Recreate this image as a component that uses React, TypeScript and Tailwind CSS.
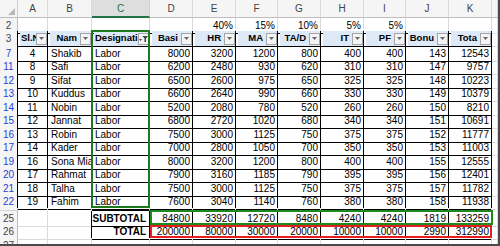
import React from "react";

const COLS =
  "grid grid-cols-[18px_30px_44px_58px_43px_43px_42px_43px_43px_42px_43px_43px_1fr]";

type Row = {
  n: number;
  label: string;
  h: string;
  kind: "pct" | "head" | "data" | "sp" | "sub" | "tot" | "blank";
  vals?: (string | number)[];
};

const data: [number, ...(string | number)[]][] = [
  [7, 4, "Shakib", 8000, 3200, 1200, 800, 400, 400, 143, 12543],
  [11, 8, "Safi", 6200, 2480, 930, 620, 310, 310, 147, 9757],
  [12, 9, "Sifat", 6500, 2600, 975, 650, 325, 325, 148, 10223],
  [13, 10, "Kuddus", 6600, 2640, 990, 660, 330, 330, 149, 10379],
  [14, 11, "Nobin", 5200, 2080, 780, 520, 260, 260, 150, 8210],
  [15, 12, "Jannat", 6800, 2720, 1020, 680, 340, 340, 151, 10691],
  [16, 13, "Robin", 7500, 3000, 1125, 750, 375, 375, 152, 11777],
  [17, 14, "Kader", 7000, 2800, 1050, 700, 350, 350, 153, 11003],
  [19, 16, "Sona Mia", 8000, 3200, 1200, 800, 400, 400, 155, 12555],
  [20, 17, "Rahmat", 7900, 3160, 1185, 790, 395, 395, 156, 12401],
  [21, 18, "Talha", 7500, 3000, 1125, 750, 375, 375, 157, 11782],
  [22, 19, "Fahim", 7600, 3040, 1140, 760, 380, 380, 158, 11938],
];

const rows: Row[] = [
  { n: 2, label: "2", h: "h-[13px]", kind: "pct" },
  { n: 3, label: "3", h: "h-[15px]", kind: "head" },
  ...data.map((d, i) => ({
    n: d[0] as number,
    label: String(d[0]),
    h: i % 2 === 0 ? "h-[13px]" : "h-[14px]",
    kind: "data" as const,
    vals: [d[1], d[2], "Labor", ...d.slice(3)],
  })),
  { n: 23.5, label: "", h: "h-[3px]", kind: "sp" },
  {
    n: 25,
    label: "25",
    h: "h-[13px]",
    kind: "sub",
    vals: ["", "", "SUBTOTAL", 84800, 33920, 12720, 8480, 4240, 4240, 1819, 133259],
  },
  {
    n: 26,
    label: "26",
    h: "h-[14px]",
    kind: "tot",
    vals: ["", "", "TOTAL", 200000, 80000, 30000, 20000, 10000, 10000, 2990, 312990],
  },
  { n: 27, label: "27", h: "h-[13px]", kind: "blank" },
];

const inT = (r: number, c: number) =>
  (r >= 3 && r <= 22 && c >= 1 && c <= 11) ||
  ((r === 25 || r === 26) && c >= 3 && c <= 11);

const headers = [
  { t: "Sl.N", align: "left" },
  { t: "Nam", align: "right" },
  { t: "Designati", align: "left", filter: true },
  { t: "Basi", align: "right" },
  { t: "HR", align: "right" },
  { t: "MA", align: "right" },
  { t: "TA/D", align: "right" },
  { t: "IT", align: "right" },
  { t: "PF", align: "right" },
  { t: "Bonu", align: "right" },
  { t: "Tota", align: "right" },
];

const pct: Record<number, string> = { 5: "40%", 6: "15%", 7: "10%", 8: "5%", 9: "5%" };

function DropBtn({ filter }: { filter?: boolean }) {
  return (
    <div className="w-[11px] h-[12px] shrink-0 border border-[#a6a6a6] bg-[#f4f4f4] flex items-center justify-center">
      {filter ? (
        <svg width="9" height="8" viewBox="0 0 9 8">
          <polygon points="0,4 3,4 1.5,6" fill="#444" />
          <polygon points="3.5,1 9,1 7,3.5 7,7 5.5,7 5.5,3.5" fill="#444" />
        </svg>
      ) : (
        <svg width="5" height="3" viewBox="0 0 5 3">
          <polygon points="0,0 5,0 2.5,3" fill="#666" />
        </svg>
      )}
    </div>
  );
}

export default function App() {
  const colLetters = ["A", "B", "C", "D", "E", "F", "G", "H", "I", "J", "K", ""];
  return (
    <div
      className="relative w-[500px] h-[246px] overflow-hidden bg-white border-r-2 border-b-2 border-r-[#4a4a4a] border-b-[#4a4a4a] text-[10px] text-black"
      style={{ fontFamily: '"Liberation Sans", Arial, sans-serif' }}
    >
      {/* column header */}
      <div className={`${COLS} h-[18px]`}>
        <div className="relative bg-[#f5f5f5] border-r border-b border-r-[#cfcfcf] border-b-[#bdbdbd]">
          <svg className="absolute right-[2px] bottom-[2px]" width="7" height="7" viewBox="0 0 7 7">
            <polygon points="7,0 7,7 0,7" fill="#b8b8b8" />
          </svg>
        </div>
        {colLetters.map((l, i) =>
          l === "C" ? (
            <div
              key={i}
              className="flex items-center justify-center bg-[#dedede] text-[#217346] border-r border-r-[#cfcfcf] border-b-2 border-b-[#217346]"
            >
              {l}
            </div>
          ) : (
            <div
              key={i}
              className="flex items-center justify-center bg-[#f5f5f5] text-[#444] border-r border-b border-r-[#d8d8d8] border-b-[#bdbdbd]"
            >
              {l}
            </div>
          )
        )}
      </div>

      {rows.map((row, ri) => {
        const next = rows[ri + 1];
        const nextN = next ? next.n : 999;
        const rowHeadBlue = row.kind === "data";
        return (
          <div key={ri} className={`${COLS} ${row.h}`}>
            <div
              className={`flex items-center justify-center bg-[#f5f5f5] border-b border-b-[#d6d6d6] border-r ${
                row.n >= 3 && row.n <= 22 ? "border-r-black" : "border-r-[#bdbdbd]"
              } ${rowHeadBlue ? "text-[#2a3fd6]" : "text-[#444]"}`}
            >
              {row.label}
            </div>
            {Array.from({ length: 12 }).map((_, ci) => {
              const c = ci + 1;
              const rBlack = inT(row.n, c) || inT(row.n, c + 1);
              const bBlack = inT(row.n, c) || inT(nextN, c);
              const bc = `border-r border-b ${rBlack ? "border-r-black" : "border-r-[#dadada]"} ${
                bBlack ? "border-b-black" : row.kind === "sp" ? "border-b-transparent" : "border-b-[#dadada]"
              }`;
              let content: React.ReactNode = null;
              let align = "justify-end pr-[2px]";
              if (row.kind === "pct" && pct[c]) content = pct[c];
              if (row.kind === "head" && c <= 11) {
                const h = headers[c - 1];
                return (
                  <div key={ci} className={`${bc} flex items-stretch pl-[2px] overflow-hidden`}>
                    <div className="flex-1 flex items-center bg-[#dde9f6] overflow-hidden">
                      <span
                        className={`flex-1 overflow-hidden whitespace-nowrap font-bold text-[9.5px] ${
                          h.align === "left" ? "text-left pl-[1px]" : "text-right pr-[3px]"
                        }`}
                      >
                        {h.t}
                      </span>
                      <DropBtn filter={h.filter} />
                    </div>
                  </div>
                );
              }
              if ((row.kind === "data" || row.kind === "sub" || row.kind === "tot") && c <= 11) {
                const v = row.vals![c - 1];
                content = v;
                if (row.kind === "data") {
                  if (c === 1) align = "justify-center";
                  if (c === 2 || c === 3) align = "justify-start pl-[3px]";
                } else if (c === 3) {
                  align = "justify-end pr-[3px] font-bold";
                }
              }
              return (
                <div
                  key={ci}
                  className={`${bc} flex items-center ${align} overflow-hidden whitespace-nowrap`}
                >
                  {content}
                </div>
              );
            })}
          </div>
        );
      })}

      {/* annotation outlines */}
      <div className="absolute left-[91px] top-[30px] w-[59px] h-[178px] border-2 border-[#1d7a1d] pointer-events-none" />
      <div className="absolute left-[150px] top-[210px] w-[343px] h-[15px] border-2 border-[#1d8a1d] pointer-events-none" />
      <div className="absolute left-[150px] top-[225px] w-[342px] h-[13px] border-2 border-[#e51f1f] pointer-events-none" />
    </div>
  );
}
